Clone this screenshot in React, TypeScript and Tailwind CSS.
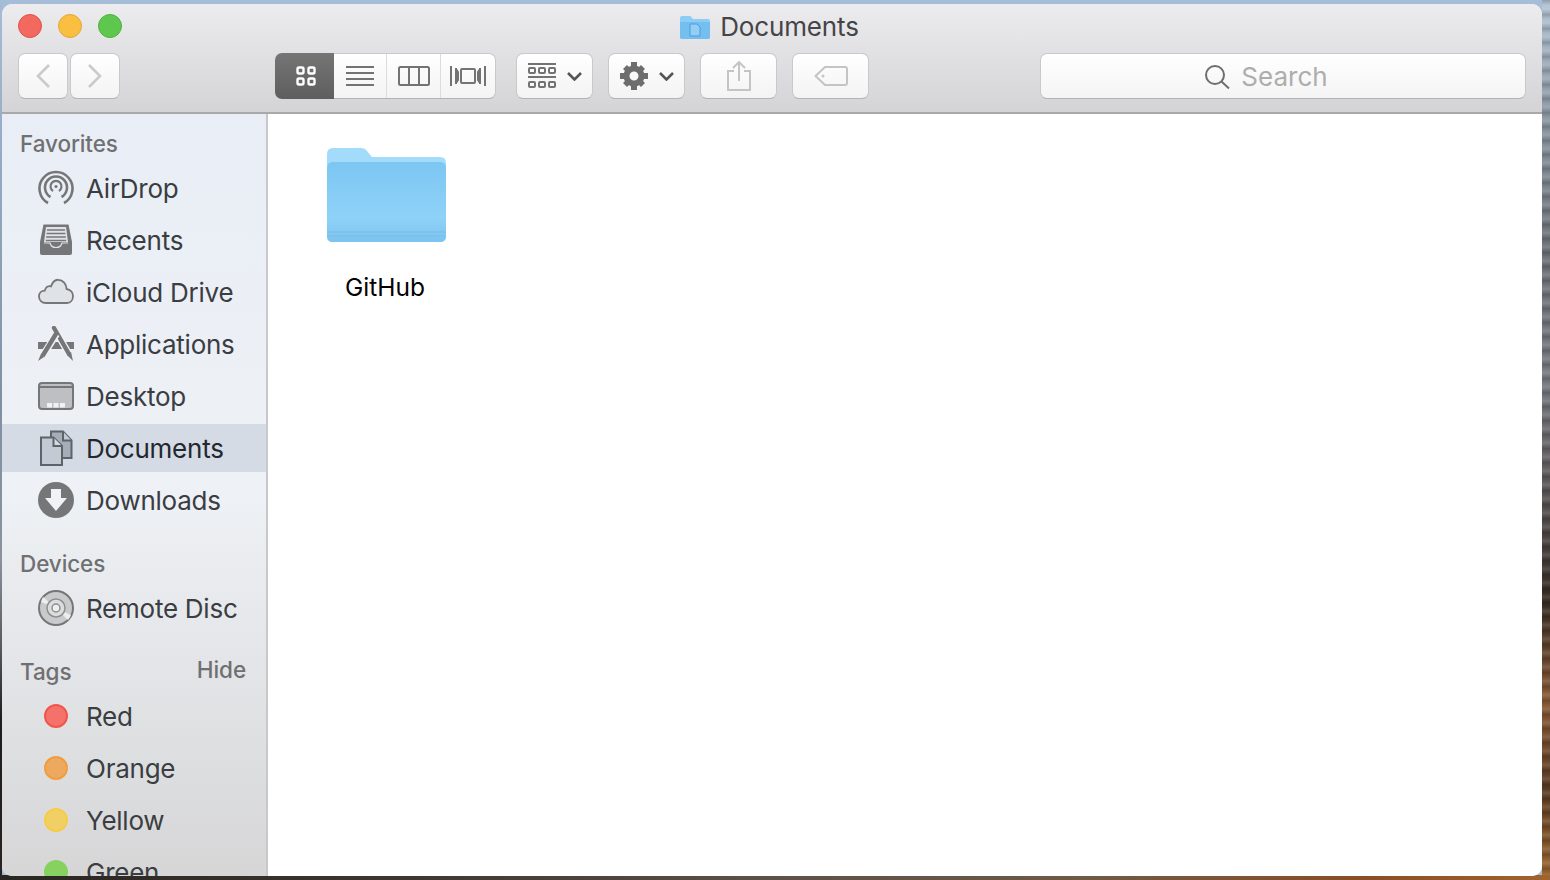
import React from "react";

const sans = "font-['Inter','Liberation_Sans',sans-serif]";

// sidebar icons, all drawn on a 36x36 box
const AirDropIcon = () => (
  <svg width="36" height="36" viewBox="0 0 36 36" fill="none" stroke="#757677">
    <path d="M10 33 A16.5 16.5 0 1 1 26 33" strokeWidth="2.6" />
    <path d="M12.5 27 A11 11 0 1 1 23.5 27" strokeWidth="2.6" />
    <path d="M15 21 A5.5 5.5 0 1 1 21 21" strokeWidth="2.2" />
    <circle cx="18" cy="16.5" r="1.6" fill="#757677" stroke="none" />
  </svg>
);

const RecentsIcon = () => (
  <svg width="36" height="36" viewBox="0 0 36 36" fill="none">
    <path d="M5.5 2.5 H30.5 L34 20 V31 Q34 33 32 33 H4 Q2 33 2 31 V20 Z" fill="#757677" />
    <path d="M8 5 H28 L30 20 H6 Z" fill="#dfe3e9" />
    <path d="M9 8 H27 M8.6 11.5 H27.4 M8.2 15 H27.8 M7.8 18.5 H28.2" stroke="#757677" strokeWidth="1.4" />
    <path d="M6 21 H12 Q13 25.5 18 25.5 Q23 25.5 24 21 H30" stroke="#dfe3e9" strokeWidth="1.2" />
  </svg>
);

const CloudIcon = () => (
  <svg width="36" height="36" viewBox="0 0 36 36">
    <path
      d="M8 29 C3.5 29 1 26 1 22.5 C1 19 3.5 16.6 6.8 16.6 C7.6 13 10.4 11.6 13 12.4 C14.6 8 17.5 5.5 20.5 5.8 C25 6 28.4 10 28.6 15 C32.6 15.6 35 18.6 35 22 C35 26 32.6 29 29 29 Z"
      fill="#dfe3e8"
      stroke="#757677"
      strokeWidth="1.8"
    />
  </svg>
);

const AppsIcon = () => (
  <svg width="36" height="36" viewBox="0 0 36 36" fill="none">
    <path d="M0 16 H36 V23 H0 Z" fill="#757677" />
    <path d="M16 2 L31 28" stroke="#eef1f6" strokeWidth="7" />
    <path d="M16 2 L31 28" stroke="#757677" strokeWidth="4.4" strokeLinecap="round" />
    <path d="M29 29 L35 35 L33 26 Z" fill="#757677" />
    <path d="M18.5 8 L4.5 30" stroke="#eef1f6" strokeWidth="7" />
    <path d="M18.5 7 L4.5 30" stroke="#757677" strokeWidth="4.4" />
    <path d="M3 28 L0 35 L6 31 Z" fill="#757677" />
  </svg>
);

const DesktopIcon = () => (
  <svg width="36" height="36" viewBox="0 0 36 36" fill="none">
    <rect x="1" y="5" width="34" height="26" rx="3" fill="#bdbfc2" stroke="#757677" strokeWidth="2" />
    <path d="M1 9 H35" stroke="#757677" strokeWidth="2" />
    <path d="M9 25 H14 V29.5 H9 Z M15.5 25 H20.5 V29.5 H15.5 Z M22 25 H27 V29.5 H22 Z" fill="#eef1f6" />
  </svg>
);

const DocsIcon = () => (
  <svg width="36" height="36" viewBox="0 0 36 36" stroke="#5f6367" strokeWidth="2">
    <path d="M13 1.5 H25 L33.5 10.5 V28 H13 Z" fill="#a5adb8" />
    <path d="M25 1.5 V10.5 H33.5" fill="#c3cad3" />
    <path d="M3 7.5 H15.5 L24 16 V35 H3 Z" fill="#c3cad3" />
    <path d="M15.5 7.5 V16 H24" fill="#d4dae2" />
  </svg>
);

const DownloadsIcon = () => (
  <svg width="36" height="36" viewBox="0 0 36 36">
    <circle cx="18" cy="18" r="18" fill="#757677" />
    <path d="M13 7 H23 V16 H29 L18 29 L7 16 H13 Z" fill="#f0f3f6" />
  </svg>
);

const DiscIcon = () => (
  <svg width="36" height="36" viewBox="0 0 36 36">
    <circle cx="18" cy="18" r="17" fill="#c9cacb" stroke="#757677" strokeWidth="2" />
    <path d="M18 18 L5 7 A17 17 0 0 0 3 12 Z M18 18 L33 25 A17 17 0 0 1 30 30 Z" fill="#eceded" />
    <circle cx="18" cy="18" r="9" fill="#dcdddd" stroke="#8e8f90" strokeWidth="1.5" />
    <circle cx="18" cy="18" r="4" fill="#eeeeee" stroke="#8e8f90" strokeWidth="1.5" />
  </svg>
);

const TagDot = ({ fill, ring }: { fill: string; ring: string }) => (
  <span className={`block w-6 h-6 rounded-full border-2 ${fill} ${ring}`} />
);

// small chevron used on the two dropdown buttons
const DropChevron = () => (
  <svg width="15" height="9" viewBox="0 0 15 9" fill="none" stroke="#555" strokeWidth="2.6">
    <path d="M1 1 L7.5 7.5 L14 1" />
  </svg>
);

interface SideItem {
  label: string;
  icon: React.ReactNode;
  active?: boolean;
}

const favorites: SideItem[] = [
  { label: "AirDrop", icon: <AirDropIcon /> },
  { label: "Recents", icon: <RecentsIcon /> },
  { label: "iCloud Drive", icon: <CloudIcon /> },
  { label: "Applications", icon: <AppsIcon /> },
  { label: "Desktop", icon: <DesktopIcon /> },
  { label: "Documents", icon: <DocsIcon />, active: true },
  { label: "Downloads", icon: <DownloadsIcon /> },
];

const tags: SideItem[] = [
  { label: "Red", icon: <TagDot fill="bg-[#f4726a]" ring="border-[#f1564c]" /> },
  { label: "Orange", icon: <TagDot fill="bg-[#eda95f]" ring="border-[#f29d3d]" /> },
  { label: "Yellow", icon: <TagDot fill="bg-[#f0d065]" ring="border-[#f9cb45]" /> },
  { label: "Green", icon: <TagDot fill="bg-[#86d160]" ring="border-[#86d160]" /> },
];

const Row = ({ item }: { item: SideItem }) => (
  <div className={`flex items-center h-[48px] mb-1 pl-[36px] shrink-0 ${item.active ? "bg-[#d4dbe4] text-[#23272e]" : "text-[#3a3d42]"}`}>
    <span className="w-[36px] h-[36px] flex items-center justify-center shrink-0">{item.icon}</span>
    <span className="ml-[12px] pt-[2px] text-[26px] tracking-[-0.25px] leading-none">{item.label}</span>
  </div>
);

const ToolButton = ({ className, children }: { className?: string; children: React.ReactNode }) => (
  <div className={`h-[46px] flex items-center justify-center rounded-[7px] bg-gradient-to-b from-white to-[#f3f3f3] border border-[#c9c8ca] border-b-[#b3b2b4] ${className ?? ""}`}>
    {children}
  </div>
);

const Toolbar = () => (
  <div className="h-[110px] shrink-0 flex flex-col bg-gradient-to-b from-[#ecebed] to-[#d4d3d5] border-b-2 border-b-[#a9a8aa] rounded-t-[10px]">
    <div className="h-[44px] relative flex items-center justify-center pt-[2px]">
      <div className="absolute left-[16px] top-[10px] flex gap-[16px]">
        <span className="block w-6 h-6 rounded-full bg-[#f3695f] border border-[#dc5249]" />
        <span className="block w-6 h-6 rounded-full bg-[#fabf40] border border-[#e0a73a]" />
        <span className="block w-6 h-6 rounded-full bg-[#5ec84e] border border-[#4bb33d]" />
      </div>
      <div className="flex items-center ml-[-5px]">
        <svg width="30" height="24" viewBox="0 0 30 24" className="mr-[10px]">
          <path d="M0 3 Q0 1 2 1 H10 Q11 1 12 3 L13 4 H28 Q30 4 30 6 V22 Q30 24 28 24 H2 Q0 24 0 22 Z" fill="#8bcdf5" />
          <path d="M0 7 H30 V22 Q30 24 28 24 H2 Q0 24 0 22 Z" fill="#74bff0" />
          <path d="M10 9 H17 L20 12 V21 H10 Z" fill="#93cef5" stroke="#4a9ce0" strokeWidth="1" />
        </svg>
        <span className="text-[26px] leading-none text-[#454447] tracking-[-0.15px]">Documents</span>
      </div>
    </div>
    <div className="flex items-start pl-[16px] pr-[16px] pt-[5px]">
      <div className="flex gap-[2px]">
        <ToolButton className="w-[50px]">
          <svg width="16" height="26" viewBox="0 0 16 26" fill="none" stroke="#cacaca" strokeWidth="2.6">
            <path d="M14 2 L3 13 L14 24" />
          </svg>
        </ToolButton>
        <ToolButton className="w-[50px]">
          <svg width="16" height="26" viewBox="0 0 16 26" fill="none" stroke="#cacaca" strokeWidth="2.6">
            <path d="M2 2 L13 13 L2 24" />
          </svg>
        </ToolButton>
      </div>
      <div className="ml-[155px] flex h-[46px] w-[221px]">
        <div className="w-[59px] pl-[3px] rounded-l-[7px] flex items-center justify-center bg-gradient-to-b from-[#757575] to-[#5e5e5e]">
          <svg width="20" height="20" viewBox="0 0 20 20" fill="none" stroke="#fff" strokeWidth="2.4">
            <rect x="1.5" y="1.5" width="6" height="6" rx="1.5" />
            <rect x="12.5" y="1.5" width="6" height="6" rx="1.5" />
            <rect x="1.5" y="12.5" width="6" height="6" rx="1.5" />
            <rect x="12.5" y="12.5" width="6" height="6" rx="1.5" />
          </svg>
        </div>
        <div className="flex-1 flex rounded-r-[7px] border-y border-r border-[#c9c8ca] border-b-[#b3b2b4] bg-gradient-to-b from-white to-[#f3f3f3]">
          <div className="w-[53px] flex items-center justify-center border-r border-r-[#dcdcdc]">
            <svg width="28" height="20" viewBox="0 0 28 20" stroke="#737373" strokeWidth="2">
              <path d="M0 1 H28 M0 7 H28 M0 13 H28 M0 19 H28" />
            </svg>
          </div>
          <div className="w-[54px] flex items-center justify-center border-r border-r-[#dcdcdc]">
            <svg width="32" height="20" viewBox="0 0 32 20" fill="none" stroke="#737373" strokeWidth="2">
              <rect x="1" y="1" width="30" height="18" rx="1.5" />
              <path d="M11 1 V19 M21 1 V19" />
            </svg>
          </div>
          <div className="flex-1 flex items-center justify-center">
            <svg width="36" height="20" viewBox="0 0 36 20" fill="none" stroke="#737373" strokeWidth="2">
              <rect x="11" y="3" width="14" height="14" rx="1" />
              <path d="M1 0 V20 M6 2 V18 M35 0 V20 M30 2 V18 M6 3 L8 6 V14 L6 17 M30 3 L28 6 V14 L30 17" />
            </svg>
          </div>
        </div>
      </div>
      <ToolButton className="ml-[20px] w-[77px] gap-[11px]">
        <svg width="28" height="26" viewBox="0 0 28 26" fill="none" stroke="#737373" strokeWidth="2">
          <path d="M0 1 H28 M0 14 H28" />
          <rect x="1" y="5" width="6" height="5" rx="1" />
          <rect x="11" y="5" width="6" height="5" rx="1" />
          <rect x="21" y="5" width="6" height="5" rx="1" />
          <rect x="1" y="19" width="6" height="5" rx="1" />
          <rect x="11" y="19" width="6" height="5" rx="1" />
          <rect x="21" y="19" width="6" height="5" rx="1" />
        </svg>
        <DropChevron />
      </ToolButton>
      <ToolButton className="ml-[15px] w-[77px] gap-[11px]">
        <svg width="28" height="28" viewBox="0 0 28 28">
          <circle cx="14" cy="14" r="7.5" fill="none" stroke="#6d6d6d" strokeWidth="6" />
          <path d="M11 0 H17 V6 H11 Z M11 22 H17 V28 H11 Z M0 11 H6 V17 H0 Z M22 11 H28 V17 H22 Z" fill="#6d6d6d" />
          <path d="M3 7 L7 3 L11 7 L7 11 Z M17 7 L21 3 L25 7 L21 11 Z M3 21 L7 17 L11 21 L7 25 Z M17 21 L21 17 L25 21 L21 25 Z" fill="#6d6d6d" />
        </svg>
        <DropChevron />
      </ToolButton>
      <ToolButton className="ml-[15px] w-[77px]">
        <svg width="24" height="30" viewBox="0 0 24 30" fill="none" stroke="#c4c4c4" strokeWidth="2">
          <path d="M7 10 H1 V29 H23 V10 H17" />
          <path d="M12 20 V1 M6 7 L12 1 L18 7" />
        </svg>
      </ToolButton>
      <ToolButton className="ml-[15px] w-[77px]">
        <svg width="34" height="20" viewBox="0 0 34 20" fill="none" stroke="#c4c4c4" strokeWidth="2">
          <path d="M11 1 H31 Q33 1 33 3 V17 Q33 19 31 19 H11 L1.5 10 Z" strokeLinejoin="round" />
          <circle cx="9" cy="10" r="1.5" fill="#c4c4c4" stroke="none" />
        </svg>
      </ToolButton>
      <div className="ml-[171px] flex-1 h-[46px] pr-[33px] flex items-center justify-center rounded-[7px] bg-gradient-to-b from-white to-[#f4f4f4] border border-[#c9c8ca] border-b-[#b3b2b4]">
        <svg width="25" height="24" viewBox="0 0 25 24" fill="none" stroke="#6e6e6e" strokeWidth="2" className="mr-[11px] mt-[2px]">
          <circle cx="10" cy="10" r="9" />
          <path d="M16.5 16.5 L24 23.5" />
        </svg>
        <span className="text-[26px] pt-[2px] leading-none text-[#aeadae]">Search</span>
      </div>
    </div>
  </div>
);

const sectionTitle = "pl-[18px] text-[22.5px] tracking-[-0.1px] leading-[28px] h-[28px] mb-[6px] font-medium text-[#6f7072] shrink-0";

const Sidebar = () => (
  <div className="w-[266px] shrink-0 h-full overflow-hidden bg-gradient-to-b from-[#e9eef6] via-[#eef1f5] to-[#d6d6d7] border-r-2 border-r-[#c8c8ca] flex flex-col pt-[16px]">
    <div className={sectionTitle}>Favorites</div>
    {favorites.map((item) => (
      <Row key={item.label} item={item} />
    ))}
    <div className={`${sectionTitle} mt-[22px]`}>Devices</div>
    <Row item={{ label: "Remote Disc", icon: <DiscIcon /> }} />
    <div className={`${sectionTitle} mt-[22px] pr-[20px] flex justify-between`}>
      <span>Tags</span>
      <span className="-mt-[2px]">Hide</span>
    </div>
    {tags.map((item) => (
      <Row key={item.label} item={item} />
    ))}
  </div>
);

const FolderItem = () => (
  <div className="w-[170px] flex flex-col items-center">
    <svg width="120" height="96" viewBox="0 0 120 96">
      <path d="M0 6 Q0 0 6 0 H34 Q38 0 40 3 L45 9 H113 Q119 9 119 15 V88 Q119 94 113 94 H6 Q0 94 0 88 Z" fill="#a3dcfb" />
      <path d="M0 20 Q0 14 6 14 H113 Q119 14 119 20 V88 Q119 94 113 94 H6 Q0 94 0 88 Z" fill="url(#folderBody)" />
      <path d="M0 84 H119 M0 88 H119" stroke="#76bdea" strokeWidth="1" />
      <defs>
        <linearGradient id="folderBody" x1="0" y1="0" x2="0" y2="1">
          <stop offset="0" stopColor="#7cc6f2" />
          <stop offset="0.7" stopColor="#8fd2f8" />
          <stop offset="1" stopColor="#7cc3ef" />
        </linearGradient>
      </defs>
    </svg>
    <span className="mt-[31px] -ml-[4px] text-[24.5px] leading-none text-black">GitHub</span>
  </div>
);

const App: React.FC = () => {
  return (
    <div className={`w-[1550px] h-[880px] overflow-hidden [background:linear-gradient(90deg,#2a2622,#3c3530_25%,#5e5148_50%,#6e5a46_70%,#8a4e26_88%,#a0642e)_bottom/100%_5px_no-repeat,repeating-linear-gradient(180deg,rgba(0,0,0,.2)_0,rgba(0,0,0,0)_5px,rgba(255,255,255,.12)_9px,rgba(0,0,0,.14)_14px)_right/8px_100%_no-repeat,linear-gradient(180deg,#b5c6d6_0,#8d9aa6_110px,#6d7278_250px,#777b82_380px,#5e5a5c_480px,#352a22_600px,#8a5a36_700px,#5a3a22_790px,#a06a30_880px)_right/8px_100%_no-repeat,linear-gradient(180deg,#a4bcd6_0,#7f90a4_400px,#8a929c_560px,#55575c_650px,#1e1c1c_720px,#2a2420_880px)_left/2px_100%_no-repeat,#a5bdd6] pt-[4px] pl-[2px] pr-[8px] pb-[4px] ${sans}`}>
      <div className="h-full flex flex-col rounded-[10px] overflow-hidden bg-white">
        <Toolbar />
        <div className="flex-1 min-h-0 flex">
          <Sidebar />
          <div className="flex-1 bg-white pl-[34px] pt-[34px]">
            <FolderItem />
          </div>
        </div>
      </div>
    </div>
  );
};

export default App;
